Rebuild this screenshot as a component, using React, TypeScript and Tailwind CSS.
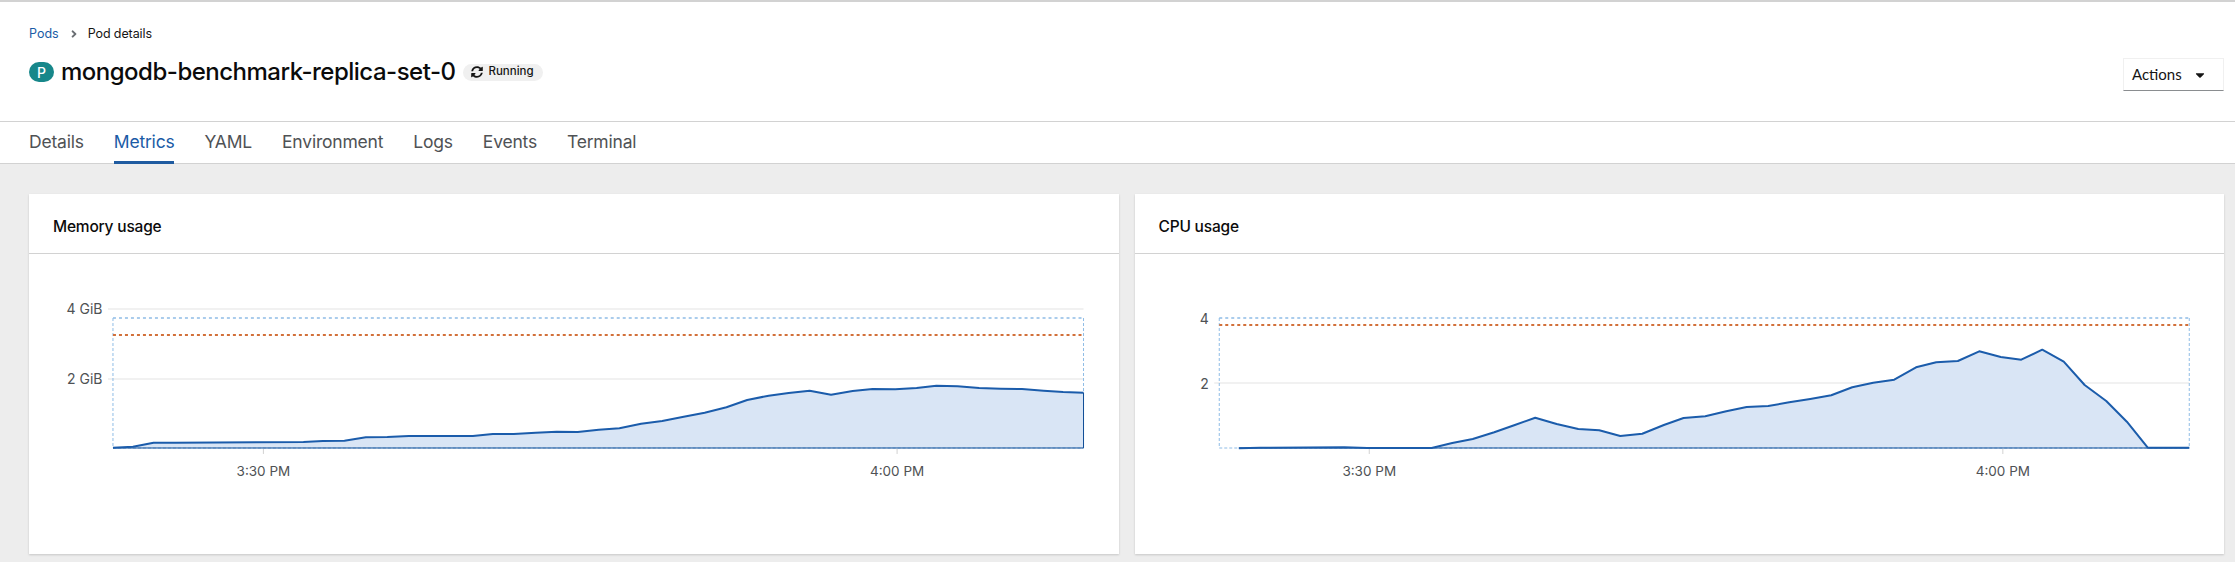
import { FaAngleRight, FaCaretDown, FaSyncAlt } from "react-icons/fa";

const memoryPoints = [
    [113, 447.7], [133, 446.7], [153.6, 442.7], [175, 442.7], [303.6, 442], [323, 441], [344.6, 440.7],
    [366, 437.3], [387.5, 437], [409, 436], [430, 436], [452, 436], [473, 436], [493, 434], [514, 434],
    [536, 432.7], [557, 431.7], [578, 432], [599, 429.7], [619.7, 428.3], [641.4, 423.7], [662.5, 421],
    [684, 416.7], [705, 412.7], [726.8, 407.3], [747.5, 400], [769, 395.7], [789, 393], [810, 390.7],
    [831.4, 394.7], [853, 391], [873, 389], [895.7, 389.3], [917, 388], [936.8, 385.7], [958, 386.3],
    [979.6, 388], [1001, 388.7], [1022.5, 389], [1044, 390.7], [1063.6, 392], [1084, 392.7],
];

const cpuPoints = [
    [1238.6, 448.3], [1260, 447.7], [1344, 447.3], [1367, 448], [1431.4, 448], [1452, 443], [1472.5, 439],
    [1494, 432.3], [1514.6, 425], [1535, 417.7], [1556.4, 424], [1578, 429], [1599, 430.3], [1620, 436],
    [1642, 433.7], [1663.6, 425], [1683.3, 418], [1705, 416.3], [1726, 411.3], [1746.4, 407], [1768, 406],
    [1789, 402.3], [1810, 399], [1831, 395.3], [1852, 387.3], [1873, 382.7], [1894, 379.7], [1915.8, 367.3],
    [1936, 362.3], [1957.6, 361], [1979, 351.3], [2000.5, 357], [2021, 359.7], [2042, 349.7], [2063.5, 361.7],
    [2084.4, 385], [2106, 401], [2126.6, 421.7], [2147.5, 447.7], [2189, 447.7],
];

const tabs = ["Details", "Metrics", "YAML", "Environment", "Logs", "Events", "Terminal"];

function Chart({
    viewBox,
    points,
    left,
    right,
    top,
    orange,
    grid,
    yTicks,
    xTicks,
}: {
    viewBox: string
    points: number[][]
    left: number
    right: number
    top: number
    orange: number
    grid: number[]
    yTicks: { y: number, label: string }[]
    xTicks: { x: number, label: string }[]
}) {
    const base = 448;
    const line = points.map((p) => p.join(",")).join(" ");
    const area = `${points[0][0]},${base} ${line} ${points[points.length - 1][0]},${base}`;

    return (
        <svg viewBox={viewBox} className="block w-full h-full" style={{ fontFamily: '"Inter", sans-serif' }}>
            {grid.map((y) => (
                <line key={y} x1={left - 5} x2={right} y1={y} y2={y} stroke="#ececec" strokeWidth="1.5" />
            ))}
            <polygon points={area} fill="#d7e4f5" fillOpacity="0.96" />
            <line x1={left} x2={left} y1={top} y2={base} stroke="#8fbce6" strokeWidth="1" strokeDasharray="3 2" />
            <line x1={right} x2={right} y1={top} y2={base} stroke="#8fbce6" strokeWidth="1" strokeDasharray="3 2" />
            <line x1={left} x2={right} y1={base} y2={base} stroke="#8fbce6" strokeWidth="1" strokeDasharray="3 2" />
            <line x1={left} x2={right} y1={top} y2={top} stroke="#8fbce6" strokeWidth="1.5" strokeDasharray="3 3" />
            <line x1={left} x2={right} y1={orange} y2={orange} stroke="#d2703a" strokeWidth="2" strokeDasharray="3 3" />
            <line x1={points[0][0]} x2={right} y1={base} y2={base} stroke="#0f4c96" strokeWidth="1.2" />
            <polyline points={line} fill="none" stroke="#1b5cab" strokeWidth="2" strokeLinejoin="round" />
            {right === 1084 && <line x1={right} x2={right} y1={392.7} y2={base} stroke="#0f4c96" strokeWidth="1" />}
            {yTicks.map((t) => (
                <text key={t.label} x={left - 10.5} y={t.y + 5} textAnchor="end" fontSize="14" fill="#4f5255">{t.label}</text>
            ))}
            {xTicks.map((t) => (
                <g key={t.label}>
                    <line x1={t.x} x2={t.x} y1={449} y2={454} stroke="#d2d2d2" />
                    <text x={t.x} y={476} textAnchor="middle" fontSize="13.5" fill="#4f5255">{t.label}</text>
                </g>
            ))}
        </svg>
    );
}

function Card({ title, children }: { title: string, children: React.ReactNode }) {
    return (
        <div className="flex flex-col bg-white h-[360px] shadow-[0_1px_2px_rgba(3,3,3,0.16)]">
            <div className="h-[60px] shrink-0 flex items-center pl-6 pt-[6px] border-b border-[#d2d2d2] text-[15.5px] font-medium text-[#0b0b0b] tracking-[-0.2px]">
                {title}
            </div>
            <div className="h-[300px]">{children}</div>
        </div>
    );
}

export default function App() {
    return (
        <div className="h-[562px] overflow-hidden flex flex-col bg-[#ededed] font-['Inter',sans-serif]">
            <div className="h-[122px] shrink-0 bg-white border-y border-[#d2d2d2] border-t-2 flex justify-between">
                <div className="pl-[29px] pt-[24px]">
                    <div className="flex items-center text-[12.5px] leading-4 h-4">
                        <span className="text-[#1b5ba6]">Pods</span>
                        <FaAngleRight className="ml-[9px] mr-[8px] text-[#6a6e73] text-[12px]" />
                        <span className="text-[#151515] tracking-[-0.1px]">Pod details</span>
                    </div>
                    <div className="flex items-center mt-[18px] h-6">
                        <span className="w-[25px] h-5 rounded-full bg-[#17878a] text-white text-[14px] font-medium flex items-center justify-center">P</span>
                        <h1 className="ml-[7px] text-[24px] leading-6 font-medium text-[#0b0b0b] tracking-[-0.5px]">mongodb-benchmark-replica-set-0</h1>
                        <span className="ml-[8px] w-20 h-[17px] rounded-full bg-[#f0f0f0] flex items-center pl-2 text-[11.5px] font-medium text-[#151515]">
                            <FaSyncAlt className="text-[12px] mr-[5px]" />
                            Running
                        </span>
                    </div>
                </div>
                <div className="pr-[11px] pt-[56px]">
                    <div className="w-[101px] h-[33px] flex items-center justify-between pl-2 pr-[16px] border border-[#f0f0f0] border-b-[#8a8d90] font-['Lato',sans-serif] text-[15px] text-[#151515]">
                        Actions
                        <FaCaretDown className="text-[14px]" />
                    </div>
                </div>
            </div>
            <div className="h-[42px] shrink-0 bg-white border-b border-[#d2d2d2] flex pl-[29px] gap-[30px] text-[17.5px] text-[#4f5255] tracking-[-0.2px]">
                {tabs.map((tab) => (
                    <div
                        key={tab}
                        className={tab === "Metrics"
                            ? "flex items-center h-[42px] pt-[1px] border-b-[3px] border-[#1f5ba0] text-[#1b5ba6]"
                            : "flex items-center h-[42px] pt-[1px] border-b-[3px] border-transparent"}
                    >
                        {tab}
                    </div>
                ))}
            </div>
            <div className="grid grid-cols-2 gap-4 pl-[29px] pr-[11px] pt-[30px]">
                <Card title="Memory usage">
                    <Chart
                        viewBox="29 254 1090 300"
                        points={memoryPoints}
                        left={113}
                        right={1084}
                        top={318}
                        orange={335}
                        grid={[309, 379]}
                        yTicks={[{ y: 309, label: "4 GiB" }, { y: 379, label: "2 GiB" }]}
                        xTicks={[{ x: 263.5, label: "3:30 PM" }, { x: 897.5, label: "4:00 PM" }]}
                    />
                </Card>
                <Card title="CPU usage">
                    <Chart
                        viewBox="1135 254 1089 300"
                        points={cpuPoints}
                        left={1219}
                        right={2189}
                        top={318}
                        orange={325}
                        grid={[383]}
                        yTicks={[{ y: 319, label: "4" }, { y: 384, label: "2" }]}
                        xTicks={[{ x: 1369, label: "3:30 PM" }, { x: 2002.6, label: "4:00 PM" }]}
                    />
                </Card>
            </div>
        </div>
    );
}
